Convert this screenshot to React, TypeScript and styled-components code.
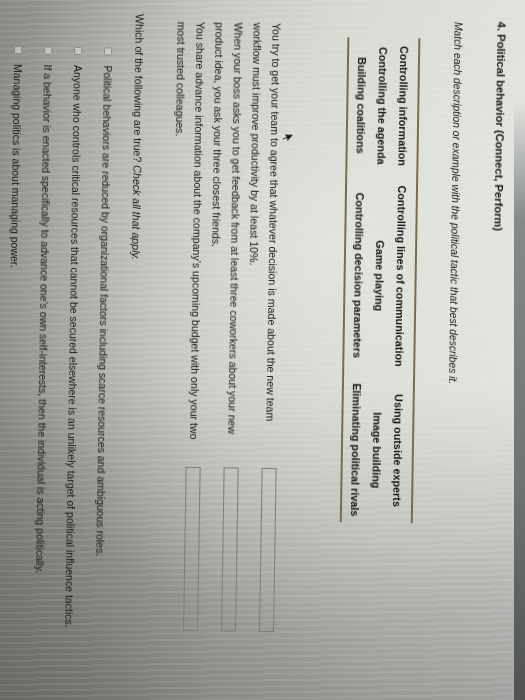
import React from 'react';
import styled, { createGlobalStyle } from 'styled-components';

const GlobalStyle = createGlobalStyle`
  html, body {
    margin: 0;
    padding: 0;
  }
  body {
    width: 525px;
    height: 700px;
    overflow: hidden;
    background: #b8b9b4;
  }
`;

// the photo: a laptop screen shot sideways, lighter toward the top right
const Photo = styled.div`
  position: relative;
  width: 525px;
  height: 700px;
  overflow: hidden;
  background:
    repeating-linear-gradient(179deg, rgba(255, 255, 255, 0.07) 0 2px, rgba(255, 255, 255, 0) 2px 6px),
    radial-gradient(ellipse 70% 55% at 62% 35%, rgba(230, 235, 226, 0.75) 0%, rgba(230, 235, 226, 0) 100%),
    linear-gradient(to bottom, rgba(30, 30, 28, 0) 55%, rgba(30, 30, 28, 0.32) 100%),
    linear-gradient(to left, #e0e0de 0%, #d3d4cf 30%, #bdbeb9 58%, #9d9d98 82%, #8a8a85 100%);
`;

const Bezel = styled.div`
  position: absolute;
  right: 0;
  top: 100px;
  bottom: 0;
  width: 11px;
  background: linear-gradient(to bottom, rgba(120, 124, 124, 0) 0%, #858a8a 20%, #6e7272 65%, #505252 100%);
`;

// the page as it is on the screen, turned a quarter round and a little more
const Screen = styled.div`
  position: relative;
  width: 700px;
  height: 525px;
  box-sizing: border-box;
  padding: 16px 0 0 20px;
  transform-origin: 0 0;
  transform: translateX(525px) rotate(90.9deg);
  font-family: 'Liberation Sans', Arial, sans-serif;
  color: #161616;
  filter: blur(0.25px);
`;

const Title = styled.div`
  margin-left: 2px;
  font-size: 11.2px;
  font-weight: bold;
  line-height: 14px;
  white-space: nowrap;
`;

const Instructions = styled.div`
  margin: 30px 0 0 3px;
  font-size: 10.3px;
  font-style: italic;
  line-height: 14px;
  white-space: nowrap;
`;

const TacticTable = styled.div`
  display: grid;
  grid-template-columns: 136px 204px 145px;
  width: 485px;
  margin: 29.5px 0 0 20px;
  padding: 4.5px 0 2px;
  border-top: 2.5px solid #7e6b49;
  border-bottom: 2.5px solid #7e6b49;
`;

const Tactic = styled.div`
  font-size: 10.8px;
  font-weight: bold;
  line-height: 21px;
  text-align: center;
  white-space: nowrap;
`;

const Cursor = styled.svg`
  position: absolute;
  left: 137px;
  top: 228px;
`;

const MatchList = styled.div`
  margin-top: 61.5px;
`;

const MatchRow = styled.div`
  display: flex;
  align-items: flex-start;
  height: 38px;
`;

const MatchText = styled.div`
  width: 445px;
  margin-left: 7px;
  font-size: 10.6px;
  line-height: 19px;
  white-space: nowrap;
`;

const AnswerBox = styled.div`
  width: 164px;
  height: 15px;
  margin-top: 2px;
  box-sizing: border-box;
  border: 1.5px solid #7e7e7a;
`;

const Question = styled.div`
  margin-top: 23.5px;
  font-size: 10.6px;
  line-height: 19px;
  white-space: nowrap;

  em {
    font-style: italic;
  }
`;

const Checklist = styled.div`
  margin-top: 5.5px;
`;

const Option = styled.label`
  display: flex;
  align-items: center;
  gap: 10px;
  height: 30px;
  padding-left: 34px;
  font-size: 10.5px;
  white-space: nowrap;
`;

const Box = styled.span`
  width: 8px;
  height: 8px;
  box-sizing: border-box;
  border: 1px solid #8a8a88;
  border-radius: 1.5px;
  background: rgba(236, 236, 234, 0.5);
`;

const tactics = [
  'Controlling information',
  'Controlling lines of communication',
  'Using outside experts',
  'Controlling the agenda',
  'Game playing',
  'Image building',
  'Building coalitions',
  'Controlling decision parameters',
  'Eliminating political rivals',
];

const scenarios = [
  [
    'You try to get your team to agree that whatever decision is made about the new team',
    'workflow must improve productivity by at least 10%.',
  ],
  [
    'When your boss asks you to get feedback from at least three coworkers about your new',
    'product idea, you ask your three closest friends.',
  ],
  [
    'You share advance information about the company\u2019s upcoming budget with only your two',
    'most trusted colleagues.',
  ],
];

const statements = [
  'Political behaviors are reduced by organizational factors including scarce resources and ambiguous roles.',
  'Anyone who controls critical resources that cannot be secured elsewhere is an unlikely target of political influence tactics.',
  'If a behavior is enacted specifically to advance one\u2019s own self-interests, then the individual is acting politically.',
  'Managing politics is about managing power.',
];

export default function App() {
  return (
    <>
      <GlobalStyle />
      <Photo>
        <Screen>
          <Title>4. Political behavior (Connect, Perform)</Title>
          <Instructions>
            Match each description or example with the political tactic that best describes it.
          </Instructions>

          <TacticTable>
            {tactics.map(t => (
              <Tactic key={t}>{t}</Tactic>
            ))}
          </TacticTable>

          <Cursor width="10" height="14" viewBox="0 0 10 14">
            <path d="M1 1 L1 11 L3.6 8.6 L5.4 12.6 L7 11.9 L5.3 8 L8.8 8 Z" fill="#111" stroke="#f2f2f2" strokeWidth="0.8" />
          </Cursor>

          <MatchList>
            {scenarios.map(([first, second]) => (
              <MatchRow key={first}>
                <MatchText>
                  {first}
                  <br />
                  {second}
                </MatchText>
                <AnswerBox />
              </MatchRow>
            ))}
          </MatchList>

          <Question>
            Which of the following are true? <em>Check all that apply.</em>
          </Question>

          <Checklist>
            {statements.map(s => (
              <Option key={s}>
                <Box />
                {s}
              </Option>
            ))}
          </Checklist>
        </Screen>
        <Bezel />
      </Photo>
    </>
  );
}
